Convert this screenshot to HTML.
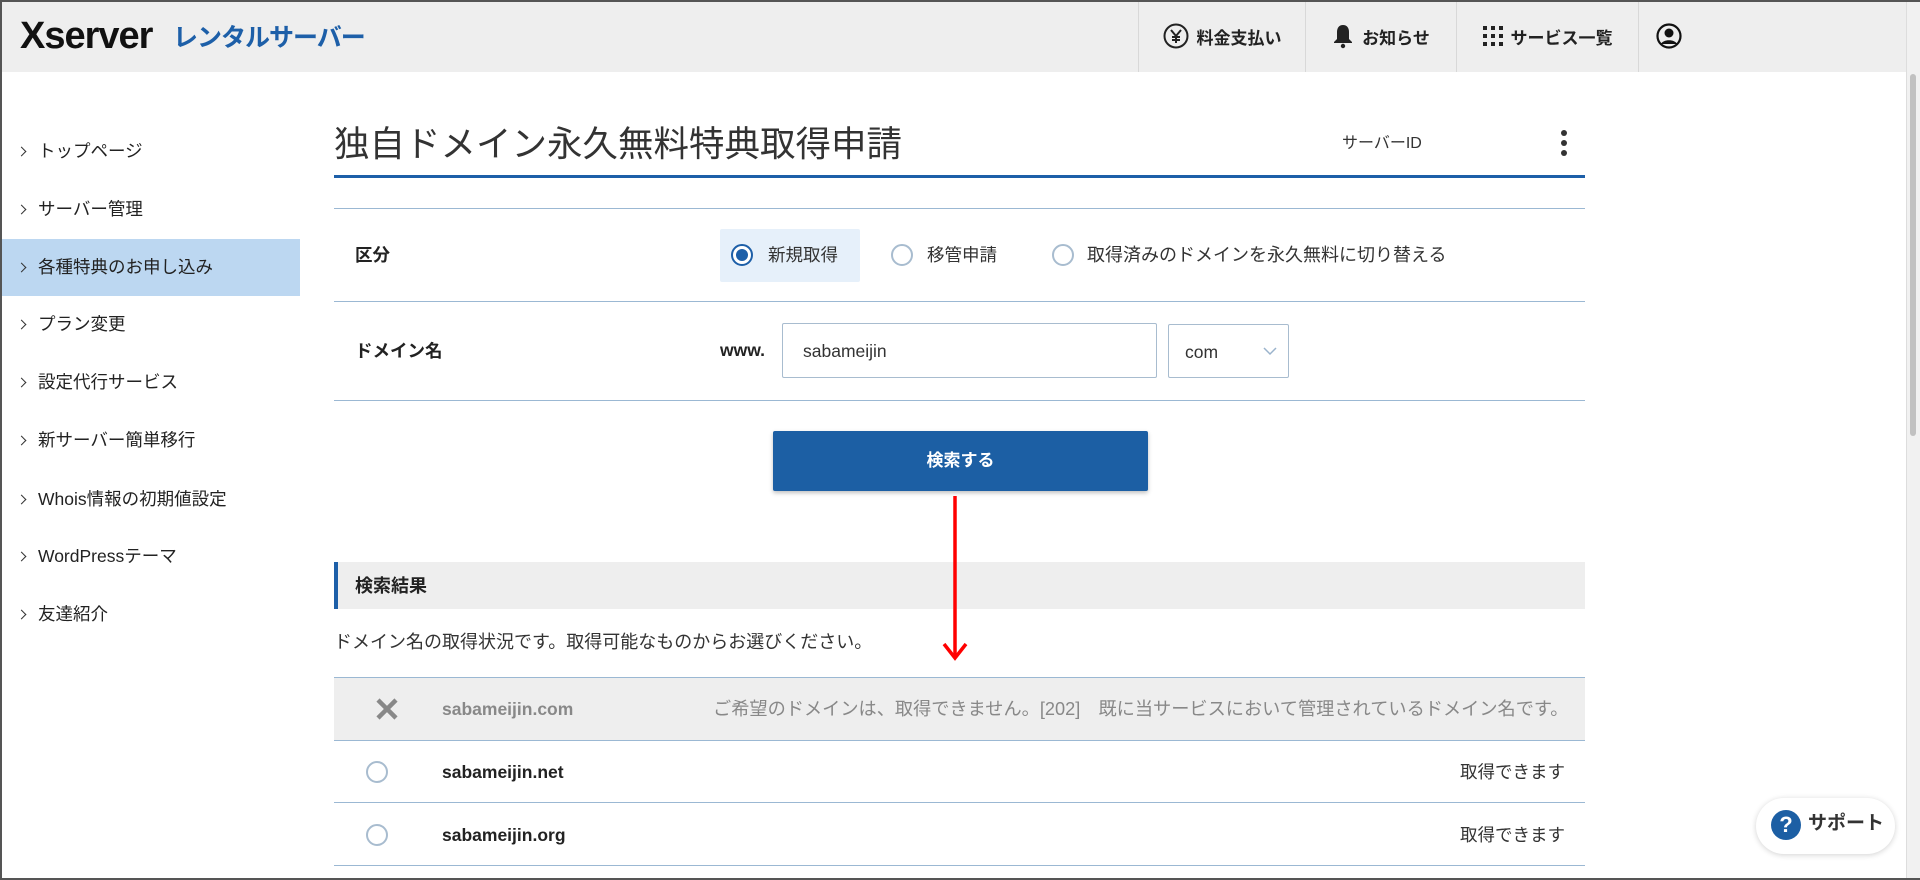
<!DOCTYPE html>
<html><head><meta charset="utf-8">
<style>
*{box-sizing:border-box;margin:0;padding:0}
body{width:1920px;height:880px;overflow:hidden;background:#fff;font-family:"Liberation Sans","Noto Sans CJK JP",sans-serif;color:#333;position:relative}
.frame{position:absolute;left:0;top:0;width:1920px;height:880px;border:2px solid #555;border-right:none;pointer-events:none;z-index:10}
.hdr{position:absolute;left:0;top:0;width:1906px;height:72px;background:#eeeeee}
.logo1{position:absolute;left:20px;top:14px;font-size:38px;font-weight:bold;color:#111;letter-spacing:-1px;line-height:44px}
.logo2{position:absolute;left:173px;top:22px;font-size:25px;font-weight:bold;color:#1d5fa8;letter-spacing:-1px;line-height:32px}
.nav{position:absolute;top:0;height:72px;border-left:1px solid #d8d8d8;display:flex;align-items:center;justify-content:center;font-weight:bold;font-size:17px;color:#222}
.si{position:absolute;left:0;width:300px;height:57px;line-height:57px;font-size:17.5px;color:#222;padding-left:38px}
.si::before{content:"";position:absolute;left:18px;top:25px;width:6px;height:6px;border-top:1.6px solid #333;border-right:1.6px solid #333;transform:rotate(45deg)}
.si.act{background:#bcd7f1}
.abs{position:absolute;line-height:24px}
.hl{position:absolute;left:334px;width:1251px;height:1px;background:#9bb8d3}
.radio{position:absolute;width:22px;height:22px;border:2px solid #a8bccf;border-radius:50%;background:#fff}
.radio.on{border-color:#1d5fa8}
.radio.on::after{content:"";position:absolute;left:3px;top:3px;width:12px;height:12px;border-radius:50%;background:#1d5fa8}
.t17{font-size:17.5px;color:#333}
</style></head><body>
<div class="hdr">
 <div class="logo1">Xserver</div>
 <div class="logo2">レンタルサーバー</div>
 <div class="nav" style="left:1138px;width:167px">
  <svg width="26" height="26" viewBox="0 0 26 26" style="margin-right:8px"><circle cx="13" cy="13" r="11.5" fill="none" stroke="#222" stroke-width="2"/><path d="M8 7l5 6 5-6M13 13v7M9 14h8M9 17h8" stroke="#222" stroke-width="2" fill="none"/></svg>料金支払い</div>
 <div class="nav" style="left:1305px;width:151px">
  <svg width="22" height="26" viewBox="0 0 22 26" style="margin-right:8px"><path d="M11 2c-4 0-6 3-6 7v7l-3 3v1h18v-1l-3-3V9c0-4-2-7-6-7z" fill="#222"/><circle cx="11" cy="23" r="2.2" fill="#222"/></svg>お知らせ</div>
 <div class="nav" style="left:1456px;width:182px">
  <svg width="20" height="20" viewBox="0 0 20 20" style="margin-right:8px" fill="#222"><rect x="0" y="0" width="4" height="4"/><rect x="8" y="0" width="4" height="4"/><rect x="16" y="0" width="4" height="4"/><rect x="0" y="8" width="4" height="4"/><rect x="8" y="8" width="4" height="4"/><rect x="16" y="8" width="4" height="4"/><rect x="0" y="16" width="4" height="4"/><rect x="8" y="16" width="4" height="4"/><rect x="16" y="16" width="4" height="4"/></svg>サービス一覧</div>
 <div class="nav" style="left:1638px;width:60px">
  <svg width="26" height="26" viewBox="0 0 26 26"><circle cx="13" cy="13" r="11.5" fill="none" stroke="#111" stroke-width="2.2"/><circle cx="13" cy="10" r="4.5" fill="#111"/><path d="M5 21c2-5 14-5 16 0z" fill="#111"/></svg></div>
</div>
<div style="position:absolute;left:1906px;top:0;width:14px;height:880px;background:#f1f1f1;border-left:1px solid #ddd"></div>
<div style="position:absolute;left:1910px;top:74px;width:6px;height:362px;background:#c1c1c1;border-radius:3px"></div>

<div class="si" style="top:123px">トップページ</div>
<div class="si" style="top:181px">サーバー管理</div>
<div class="si act" style="top:239px">各種特典のお申し込み</div>
<div class="si" style="top:296px">プラン変更</div>
<div class="si" style="top:354px">設定代行サービス</div>
<div class="si" style="top:412px">新サーバー簡単移行</div>
<div class="si" style="top:471px">Whois情報の初期値設定</div>
<div class="si" style="top:528px">WordPressテーマ</div>
<div class="si" style="top:586px">友達紹介</div>

<div class="abs" style="left:334px;top:122px;font-size:35.5px;line-height:44px;color:#333">独自ドメイン永久無料特典取得申請</div>
<div class="abs t17" style="left:1342px;top:132px;font-size:16px">サーバーID</div>
<div class="abs" style="left:1561px;top:130px"><div style="width:6px;height:6px;border-radius:50%;background:#333;margin-bottom:4px"></div><div style="width:6px;height:6px;border-radius:50%;background:#333;margin-bottom:4px"></div><div style="width:6px;height:6px;border-radius:50%;background:#333"></div></div>
<div class="abs" style="left:334px;top:175px;width:1251px;height:3px;background:#1d5fa8"></div>
<div class="hl" style="top:208px"></div>

<div class="abs" style="left:355px;top:243px;font-size:17.5px;font-weight:bold;color:#222">区分</div>
<div class="abs" style="left:720px;top:229px;width:140px;height:53px;background:#e6f0fa;border-radius:2px"></div>
<div class="radio on" style="left:731px;top:244px"></div>
<div class="abs t17" style="left:768px;top:243px">新規取得</div>
<div class="radio" style="left:891px;top:244px"></div>
<div class="abs t17" style="left:927px;top:243px">移管申請</div>
<div class="radio" style="left:1052px;top:244px"></div>
<div class="abs t17" style="left:1087px;top:243px;font-size:18px">取得済みのドメインを永久無料に切り替える</div>
<div class="hl" style="top:301px"></div>

<div class="abs" style="left:355px;top:339px;font-size:17.5px;font-weight:bold;color:#222">ドメイン名</div>
<div class="abs" style="left:720px;top:338px;font-size:17.5px;font-weight:bold;color:#222">www.</div>
<div class="abs" style="left:782px;top:323px;width:375px;height:55px;border:1px solid #a8bccf;border-radius:2px"></div>
<div class="abs t17" style="left:803px;top:339px">sabameijin</div>
<div class="abs" style="left:1168px;top:324px;width:121px;height:54px;border:1px solid #a8bccf;border-radius:2px"></div>
<div class="abs t17" style="left:1185px;top:340px">com</div>
<svg class="abs" style="left:1263px;top:346px" width="14" height="10" viewBox="0 0 14 10"><path d="M1 2l6 6 6-6" stroke="#9ab3cc" stroke-width="1.5" fill="none"/></svg>
<div class="hl" style="top:400px"></div>

<div class="abs" style="left:773px;top:431px;width:375px;height:60px;background:#1c5fa4;border-radius:2px;box-shadow:0 2px 4px rgba(0,0,0,.25);color:#fff;font-weight:bold;font-size:17px;text-align:center;line-height:60px">検索する</div>

<div class="abs" style="left:334px;top:562px;width:1251px;height:47px;background:#eeeeee;border-left:4px solid #1d5fa8"></div>
<div class="abs" style="left:355px;top:574px;font-size:18px;font-weight:bold;color:#222">検索結果</div>
<div class="abs t17" style="left:334px;top:630px;font-size:18px">ドメイン名の取得状況です。取得可能なものからお選びください。</div>

<div class="abs" style="left:334px;top:677px;width:1251px;height:63px;background:#eeeeee"></div>
<div class="hl" style="top:677px"></div>
<svg class="abs" style="left:375px;top:697px" width="24" height="24" viewBox="0 0 24 24"><path d="M3 3l18 18M21 3L3 21" stroke="#888" stroke-width="4.5"/></svg>
<div class="abs" style="left:442px;top:697px;font-size:17.5px;font-weight:bold;color:#888">sabameijin.com</div>
<div class="abs" style="left:713px;top:697px;font-size:18.2px;color:#888">ご希望のドメインは、取得できません。[202]　既に当サービスにおいて管理されているドメイン名です。</div>
<div class="hl" style="top:740px"></div>
<div class="radio" style="left:366px;top:761px"></div>
<div class="abs" style="left:442px;top:760px;font-size:17.5px;font-weight:bold;color:#222">sabameijin.net</div>
<div class="abs t17" style="left:1435px;top:760px;width:130px;text-align:right">取得できます</div>
<div class="hl" style="top:802px"></div>
<div class="radio" style="left:366px;top:824px"></div>
<div class="abs" style="left:442px;top:823px;font-size:17.5px;font-weight:bold;color:#222">sabameijin.org</div>
<div class="abs t17" style="left:1435px;top:823px;width:130px;text-align:right">取得できます</div>
<div class="hl" style="top:865px"></div>

<svg class="abs" style="left:935px;top:494px;z-index:5" width="40" height="170" viewBox="0 0 40 170"><path d="M20 2V164" stroke="#f00" stroke-width="3.5" fill="none"/><path d="M9 150l11 14 11-14" stroke="#f00" stroke-width="3.5" fill="none"/></svg>

<div class="abs" style="left:1756px;top:798px;width:139px;height:56px;background:#fff;border-radius:28px;box-shadow:0 1px 6px rgba(0,0,0,.18)"></div>
<div class="abs" style="left:1771px;top:810px;width:30px;height:30px;border-radius:50%;background:#1c5fa4;color:#fff;font-weight:bold;font-size:22px;text-align:center;line-height:30px">?</div>
<div class="abs" style="left:1808px;top:812px;font-size:19px;font-weight:bold;color:#333">サポート</div>
<div class="frame"></div>
</body></html>
